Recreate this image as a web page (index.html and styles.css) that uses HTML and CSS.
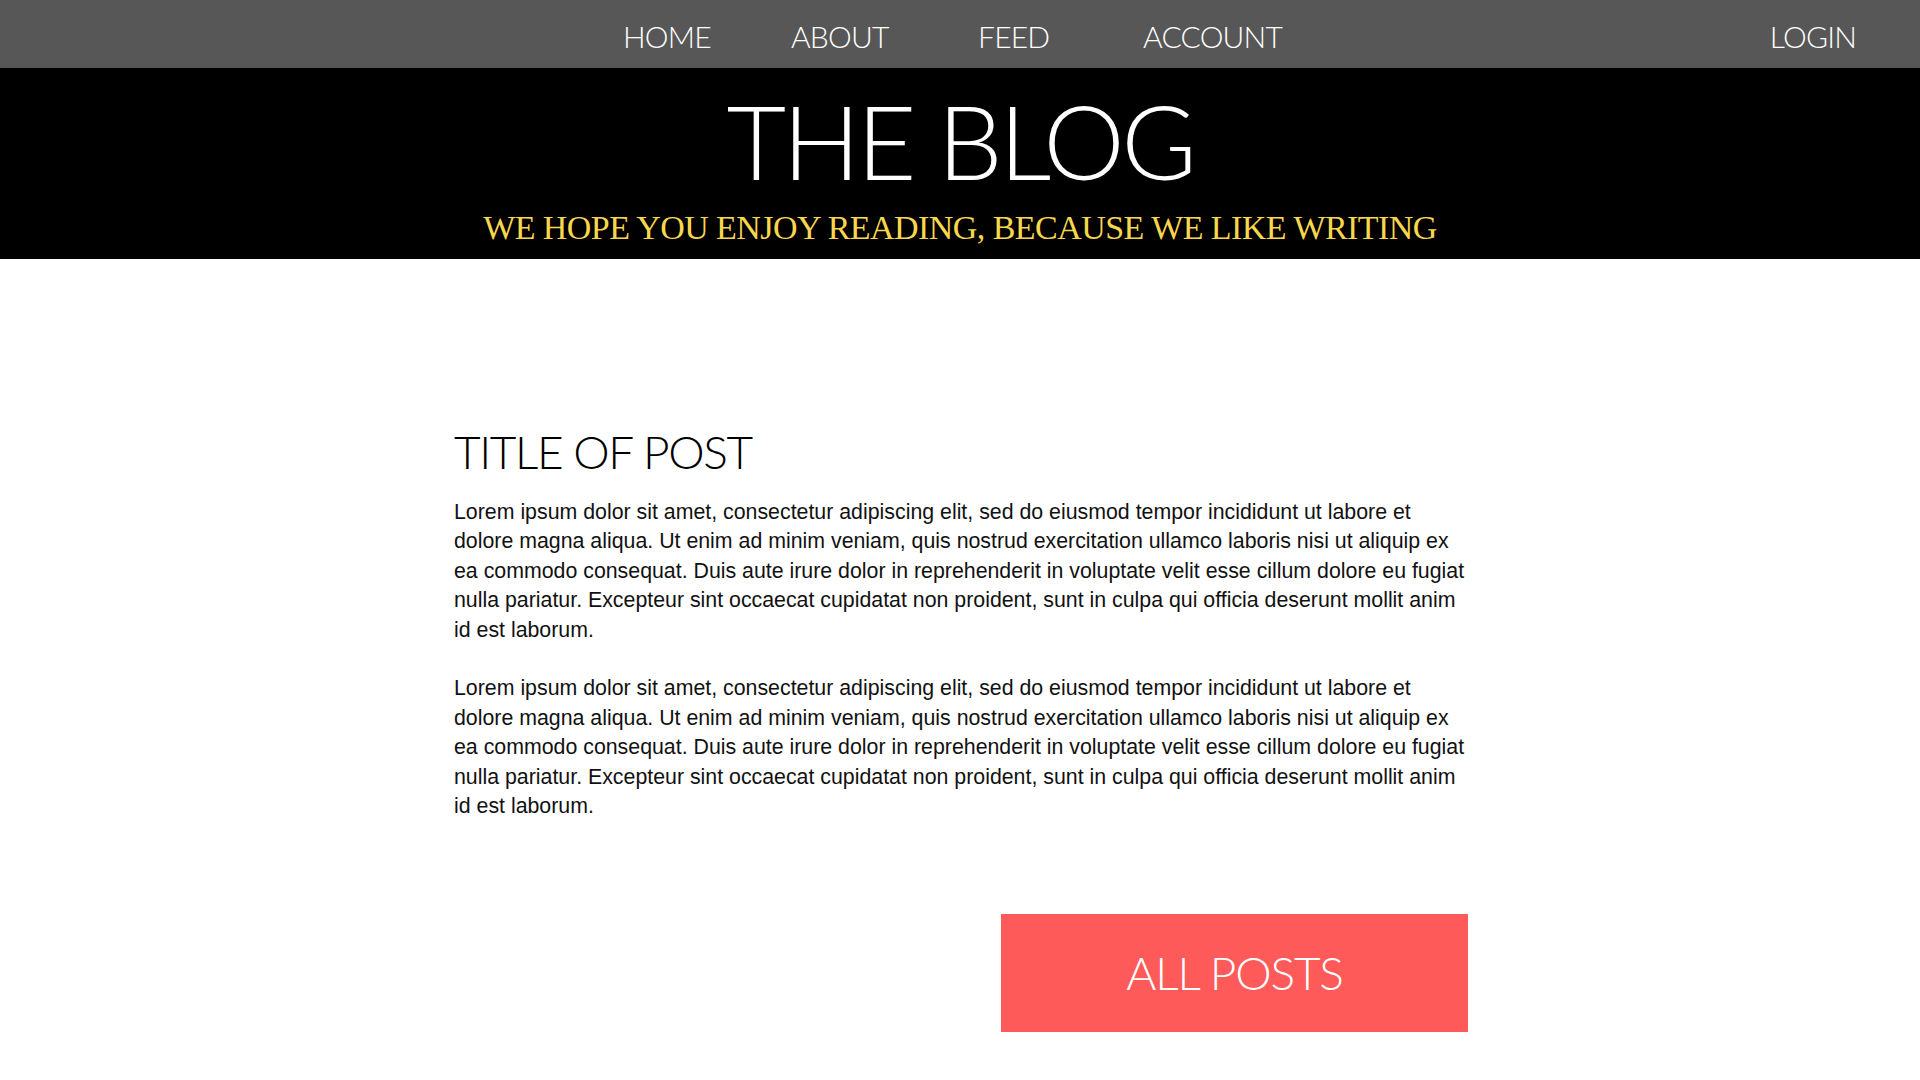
FILE: index.html
```html
<!DOCTYPE html>
<html lang="en">
<head>
<meta charset="utf-8">
<title>The Blog</title>
<link rel="stylesheet" href="styles.css">
</head>
<body>
<nav class="topnav">
  <div class="topnav-spacer"></div>
  <ul class="topnav-links">
    <li><a href="#">HOME</a></li>
    <li><a href="#">ABOUT</a></li>
    <li><a href="#">FEED</a></li>
    <li><a href="#">ACCOUNT</a></li>
  </ul>
  <div class="topnav-login"><a href="#">LOGIN</a></div>
</nav>
<header class="masthead">
  <h1 class="masthead-title">THE BLOG</h1>
  <p class="masthead-tagline">WE HOPE YOU ENJOY READING, BECAUSE WE LIKE WRITING</p>
</header>
<main class="post">
  <h2 class="post-title">TITLE OF POST</h2>
  <p class="post-text">Lorem ipsum dolor sit amet, consectetur adipiscing elit, sed do eiusmod tempor incididunt ut labore et dolore magna aliqua. Ut enim ad minim veniam, quis nostrud exercitation ullamco laboris nisi ut aliquip ex ea commodo consequat. Duis aute irure dolor in reprehenderit in voluptate velit esse cillum dolore eu fugiat nulla pariatur. Excepteur sint occaecat cupidatat non proident, sunt in culpa qui officia deserunt mollit anim id est laborum.</p>
  <p class="post-text">Lorem ipsum dolor sit amet, consectetur adipiscing elit, sed do eiusmod tempor incididunt ut labore et dolore magna aliqua. Ut enim ad minim veniam, quis nostrud exercitation ullamco laboris nisi ut aliquip ex ea commodo consequat. Duis aute irure dolor in reprehenderit in voluptate velit esse cillum dolore eu fugiat nulla pariatur. Excepteur sint occaecat cupidatat non proident, sunt in culpa qui officia deserunt mollit anim id est laborum.</p>
  <div class="post-actions">
    <a class="btn-allposts" href="#">ALL POSTS</a>
  </div>
</main>
</body>
</html>
```
FILE: styles.css
```css
* { box-sizing: border-box; }
html, body { margin: 0; padding: 0; background: #fff; }
body { font-family: "Lato", "Liberation Sans", sans-serif; }
a { color: inherit; text-decoration: none; }

.topnav {
  height: 68px;
  padding-top: 4px;
  background: #575757;
  display: grid;
  grid-template-columns: 1fr auto 1fr;
  align-items: center;
  color: #fff;
  font-family: "Lato", sans-serif;
  font-weight: 300;
  font-size: 30px;
  letter-spacing: -0.8px;
  line-height: 1;
}
.topnav-links {
  list-style: none;
  margin: 0;
  padding: 0 9px 0 0;
  display: grid;
  grid-template-columns: 168px 187px 165px 145px;
}
.topnav-login {
  justify-self: end;
  padding-right: 64px;
}

.masthead {
  background: #000;
  height: 191px;
  padding-top: 21px;
  text-align: center;
}
.masthead-title {
  margin: 0;
  color: #fff;
  font-family: "Lato", sans-serif;
  font-weight: 300;
  font-size: 103px;
  letter-spacing: -3.5px;
  line-height: 1;
}
.masthead-tagline {
  margin: 19px 0 0;
  color: #f8d74c;
  font-family: "Liberation Serif", serif;
  font-size: 34px;
  letter-spacing: -0.55px;
  line-height: 1;
}

.post {
  width: 1014px;
  margin: 0 auto;
  padding: 170px 0 40px;
  transform: translateX(1px);
}
.post-title {
  margin: 0 0 23px;
  font-family: "Lato", sans-serif;
  font-weight: 300;
  font-size: 46px;
  letter-spacing: -1.4px;
  line-height: 1;
  color: #000;
}
.post-text {
  margin: 0 0 29.4px;
  font-family: "Liberation Sans", Arial, sans-serif;
  font-size: 21.333px;
  line-height: 29.4px;
  color: #111;
}
.post-actions {
  display: flex;
  justify-content: flex-end;
  margin-top: 93px;
}
.btn-allposts {
  width: 467px;
  height: 118px;
  background: #ff5a5a;
  color: #fff;
  display: flex;
  align-items: center;
  justify-content: center;
  font-family: "Lato", sans-serif;
  font-weight: 300;
  font-size: 46px;
  letter-spacing: -1.1px;
  line-height: 1;
}
```
